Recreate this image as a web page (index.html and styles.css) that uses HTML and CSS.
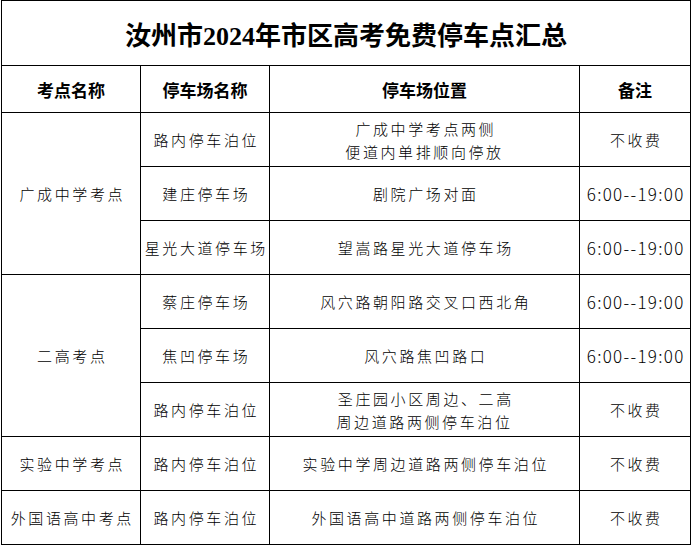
FILE: index.html
```html
<!DOCTYPE html>
<html lang="zh-CN">
<head>
<meta charset="utf-8">
<title>汝州市2024年市区高考免费停车点汇总</title>
<link rel="stylesheet" href="styles.css">
</head>
<body>
<table class="sheet">
  <colgroup>
    <col class="c1"><col class="c2"><col class="c3"><col class="c4">
  </colgroup>
  <tr class="r-title"><th colspan="4" class="title">汝州市2024年市区高考免费停车点汇总</th></tr>
  <tr class="r-head">
    <th class="head">考点名称</th>
    <th class="head">停车场名称</th>
    <th class="head">停车场位置</th>
    <th class="head">备注</th>
  </tr>
  <tr class="r-data">
    <td rowspan="3" class="cell">广成中学考点</td>
    <td class="cell">路内停车泊位</td>
    <td class="cell">广成中学考点两侧<br>便道内单排顺向停放</td>
    <td class="cell">不收费</td>
  </tr>
  <tr class="r-data">
    <td class="cell">建庄停车场</td>
    <td class="cell">剧院广场对面</td>
    <td class="time">6:00--19:00</td>
  </tr>
  <tr class="r-data">
    <td class="cell">星光大道停车场</td>
    <td class="cell">望嵩路星光大道停车场</td>
    <td class="time">6:00--19:00</td>
  </tr>
  <tr class="r-data">
    <td rowspan="3" class="cell">二高考点</td>
    <td class="cell">蔡庄停车场</td>
    <td class="cell">风穴路朝阳路交叉口西北角</td>
    <td class="time">6:00--19:00</td>
  </tr>
  <tr class="r-data">
    <td class="cell">焦凹停车场</td>
    <td class="cell">风穴路焦凹路口</td>
    <td class="time">6:00--19:00</td>
  </tr>
  <tr class="r-data">
    <td class="cell">路内停车泊位</td>
    <td class="cell">圣庄园小区周边、二高<br>周边道路两侧停车泊位</td>
    <td class="cell">不收费</td>
  </tr>
  <tr class="r-data">
    <td class="cell">实验中学考点</td>
    <td class="cell">路内停车泊位</td>
    <td class="cell">实验中学周边道路两侧停车泊位</td>
    <td class="cell">不收费</td>
  </tr>
  <tr class="r-data">
    <td class="cell">外国语高中考点</td>
    <td class="cell">路内停车泊位</td>
    <td class="cell">外国语高中道路两侧停车泊位</td>
    <td class="cell">不收费</td>
  </tr>
</table>
</body>
</html>
```

FILE: styles.css
```css
html, body {
  margin: 0;
  padding: 0;
  background: #ffffff;
}
body {
  padding-left: 1px;
  font-family: "Noto Sans CJK SC", sans-serif;
  color: #000;
}
.sheet {
  border-collapse: collapse;
  table-layout: fixed;
  width: 689px;
}
.c1 { width: 139px; }
.c2 { width: 129px; }
.c3 { width: 310px; }
.c4 { width: 111px; }
.sheet th, .sheet td {
  border: 1px solid #000;
  padding: 0;
  text-align: center;
  vertical-align: middle;
  overflow: hidden;
  white-space: nowrap;
}
.r-title { height: 65px; }
.r-head { height: 47px; }
.r-data { height: 54px; }
.title {
  font-family: "Liberation Serif", "Noto Sans CJK SC", serif;
  font-size: 26px;
  font-weight: 700;
  letter-spacing: 0;
  padding-top: 2px;
}
.head {
  font-family: "Noto Sans CJK SC", sans-serif;
  font-size: 17px;
  font-weight: 700;
  padding-top: 2px;
}
.cell {
  font-size: 15px;
  font-weight: 300;
  line-height: 23px;
  letter-spacing: 2.6px;
  text-indent: 2.6px;
  padding-top: 4px;
}
.time {
  font-family: "Noto Sans CJK SC", sans-serif;
  font-size: 17px;
  font-weight: 300;
  letter-spacing: 1.3px;
  text-indent: 1.3px;
  padding-top: 4px;
}
```
